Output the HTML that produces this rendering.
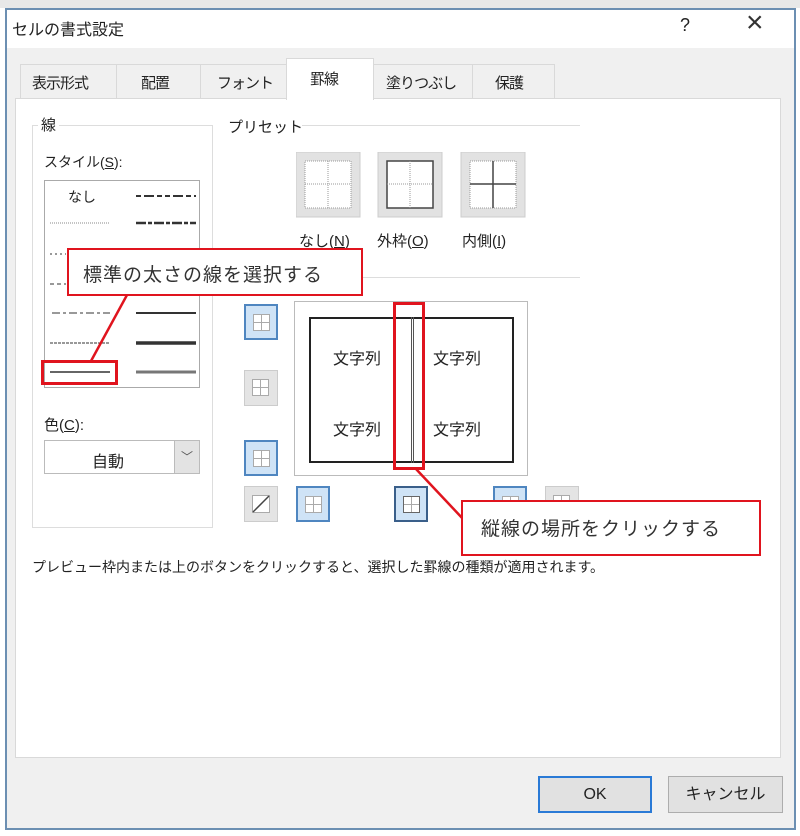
<!DOCTYPE html>
<html><head><meta charset="utf-8"><style>
*{margin:0;padding:0;box-sizing:border-box}
body{width:800px;height:836px;background:#fff;position:relative;overflow:hidden;font-family:"Liberation Sans","Noto Sans CJK JP",sans-serif;color:#222}
.a{position:absolute}
.t{font-size:15px;white-space:nowrap}
.tab{font-size:15px;letter-spacing:-1px}
.sb{position:absolute;width:34px;height:36px;border:2px solid #4f86c0;background:#cfe3f6}
.gb{position:absolute;width:34px;height:36px;border:1px solid #ccc;background:#e4e4e4}
.ic{position:absolute;left:7px;top:8px;width:17px;height:17px;border:1px solid #aaa;background:#fff}
.ic:before{content:"";position:absolute;left:7px;top:0;bottom:0;border-left:1px solid #aaa}
.ic:after{content:"";position:absolute;top:7px;left:0;right:0;border-top:1px solid #aaa}
.red{position:absolute;border:3px solid #e0141e}
.call{position:absolute;background:#fff;border:2px solid #e0141e;font-size:19px;color:#333;letter-spacing:1px}
</style></head><body>
<div class="a" style="left:0;top:0;width:800px;height:8px;background:#e8e8e8"></div>
<div class="a" style="left:5px;top:8px;width:791px;height:822px;background:#f0f0f0;border:2px solid #6c8fb2"></div>
<div class="a" style="left:7px;top:10px;width:787px;height:38px;background:#fff"></div>
<div class="a t" style="left:12px;top:16px;font-size:16px">セルの書式設定</div>
<div class="a t" style="left:680px;top:15px;font-size:18px">?</div>
<div class="a t" style="left:746px;top:6px;font-size:30px;font-weight:100;color:#333">×</div>
<!-- tabs -->
<div class="a" style="left:20px;top:64px;width:535px;height:34px;background:#f0f0f0;border:1px solid #d9d9d9;border-bottom:none"></div>
<div class="a t tab" style="left:32px;top:72px">表示形式</div>
<div class="a" style="left:116px;top:64px;height:34px;border-left:1px solid #d9d9d9"></div>
<div class="a t tab" style="left:141px;top:72px">配置</div>
<div class="a" style="left:200px;top:64px;height:34px;border-left:1px solid #d9d9d9"></div>
<div class="a t tab" style="left:217px;top:72px">フォント</div>
<div class="a" style="left:472px;top:64px;height:34px;border-left:1px solid #d9d9d9"></div>
<div class="a t tab" style="left:386px;top:72px">塗りつぶし</div>
<div class="a t tab" style="left:495px;top:72px">保護</div>
<div class="a" style="left:15px;top:98px;width:766px;height:660px;background:#fff;border:1px solid #d9d9d9"></div>
<div class="a" style="left:286px;top:58px;width:88px;height:42px;background:#fff;border:1px solid #d9d9d9;border-bottom:none"></div>
<div class="a t tab" style="left:310px;top:68px">罫線</div>
<!-- left group -->
<div class="a" style="left:32px;top:125px;width:181px;height:403px;border:1px solid #ddd"></div>
<div class="a t" style="left:38px;top:114px;background:#fff;padding:0 3px">線</div>
<div class="a t" style="left:44px;top:152px;font-size:14px">スタイル(<u>S</u>):</div>
<div class="a" style="left:44px;top:180px;width:156px;height:208px;border:1px solid #aaa;background:#fff"></div>
<div class="a t" style="left:68px;top:187px;font-size:14px">なし</div>
<svg class="a" style="left:44px;top:180px" width="156" height="208">
<g stroke="#333" fill="none">
<path d="M92 16h60" stroke-dasharray="5 3 10 3 5 3" stroke-width="2"/>
<path d="M6 43h60" stroke-dasharray="1 1" stroke="#888"/>
<path d="M92 43h60" stroke-dasharray="10 2 4 2" stroke-width="2.5"/>
<path d="M6 74h16" stroke-dasharray="2 3"/>
<path d="M6 104h16" stroke-dasharray="4 3"/>
<path d="M8 133h58" stroke-dasharray="8 3 3 3"/>
<path d="M92 133h60" stroke-width="2"/>
<path d="M6 163h60" stroke-dasharray="3 1"/>
<path d="M92 163h60" stroke-width="3.5"/>
<path d="M6 192h60" stroke-width="1.5"/>
<path d="M92 192h60" stroke-width="3" stroke="#777"/>
</g></svg>
<div class="a t" style="left:44px;top:414px;font-size:15px">色(<u>C</u>):</div>
<div class="a" style="left:44px;top:440px;width:156px;height:34px;border:1px solid #bbb;background:#fff"></div>
<div class="a" style="left:174px;top:441px;width:25px;height:32px;background:#e3e3e3;border-left:1px solid #bbb;text-align:center;font-size:12px;line-height:32px;color:#555">﹀</div>
<div class="a t" style="left:92px;top:448px;font-size:16px">自動</div>
<!-- preset -->
<div class="a t" style="left:228px;top:116px;font-size:15px">プリセット</div>
<div class="a" style="left:302px;top:125px;width:278px;border-top:1px solid #ddd"></div>
<div class="a" style="left:280px;top:277px;width:300px;border-top:1px solid #ddd"></div>
<svg class="a" style="left:296px;top:152px" width="232" height="66">
<g><rect x="0" y="0" width="64" height="65" fill="#e2e2e2" stroke="#ccc"/><rect x="9" y="9" width="46" height="47" fill="#fff" stroke="#999" stroke-dasharray="1 1"/><path d="M32 9v47M9 32h46" stroke="#999" stroke-dasharray="1 1"/></g>
<g transform="translate(82,0)"><rect x="0" y="0" width="64" height="65" fill="#e2e2e2" stroke="#ccc"/><rect x="9" y="9" width="46" height="47" fill="#fff" stroke="#444" stroke-width="1.5"/><path d="M32 9v47M9 32h46" stroke="#999" stroke-dasharray="1 1"/></g>
<g transform="translate(165,0)"><rect x="0" y="0" width="64" height="65" fill="#e2e2e2" stroke="#ccc"/><rect x="9" y="9" width="46" height="47" fill="#fff" stroke="#999" stroke-dasharray="1 1"/><path d="M32 9v47M9 32h46" stroke="#444" stroke-width="1.5"/></g>
</svg>
<div class="a t" style="left:299px;top:230px;font-size:15px">なし(<u>N</u>)</div>
<div class="a t" style="left:377px;top:230px;font-size:15px">外枠(<u>O</u>)</div>
<div class="a t" style="left:462px;top:230px;font-size:15px">内側(<u>I</u>)</div>
<!-- side buttons -->
<div class="sb" style="left:244px;top:304px"><div class="ic"></div></div>
<div class="gb" style="left:244px;top:370px"><div class="ic"></div></div>
<div class="sb" style="left:244px;top:440px"><div class="ic"></div></div>
<div class="gb" style="left:244px;top:486px"><svg class="a" style="left:7px;top:8px" width="18" height="18"><rect x=".5" y=".5" width="17" height="17" fill="#fff" stroke="#aaa"/><path d="M1 17L17 1" stroke="#444" stroke-width="1.5"/></svg></div>
<div class="sb" style="left:296px;top:486px"><div class="ic"></div></div>
<div class="sb" style="left:394px;top:486px;border-color:#3a5f8a"><div class="ic" style="border-color:#666"></div></div>
<div class="sb" style="left:493px;top:486px"><div class="ic"></div></div>
<div class="gb" style="left:545px;top:486px"><div class="ic"></div></div>
<!-- preview -->
<div class="a" style="left:294px;top:301px;width:234px;height:175px;border:1px solid #bbb;background:#fff"></div>
<div class="a" style="left:309px;top:317px;width:205px;height:146px;border:2px solid #222"></div>
<div class="a" style="left:411px;top:317px;width:3px;height:146px;border-left:1px solid #555;border-right:1px solid #555"></div>
<div class="a t" style="left:333px;top:345px;font-size:16px">文字列</div>
<div class="a t" style="left:433px;top:345px;font-size:16px">文字列</div>
<div class="a t" style="left:333px;top:416px;font-size:16px">文字列</div>
<div class="a t" style="left:433px;top:416px;font-size:16px">文字列</div>
<div class="a t" style="left:32px;top:557px;font-size:14px">プレビュー枠内または上のボタンをクリックすると、選択した罫線の種類が適用されます。</div>
<!-- buttons -->
<div class="a" style="left:538px;top:776px;width:114px;height:37px;border:2px solid #2a7ad6;background:#e1e1e1;text-align:center;line-height:33px;font-size:16px">OK</div>
<div class="a" style="left:668px;top:776px;width:115px;height:37px;border:1px solid #adadad;background:#e1e1e1;text-align:center;line-height:35px;font-size:16px">キャンセル</div>
<!-- annotations -->
<svg class="a" style="left:0;top:0" width="800" height="836"><g stroke="#e0141e" stroke-width="2.5"><path d="M127 295L91 361"/><path d="M416 469L464 520"/></g></svg>
<div class="red" style="left:41px;top:360px;width:77px;height:25px"></div>
<div class="red" style="left:393px;top:302px;width:32px;height:168px"></div>
<div class="call" style="left:67px;top:248px;width:296px;height:48px;padding:10px 0 0 14px">標準の太さの線を選択する</div>
<div class="call" style="left:461px;top:500px;width:300px;height:56px;padding:12px 0 0 18px">縦線の場所をクリックする</div>
</body></html>
